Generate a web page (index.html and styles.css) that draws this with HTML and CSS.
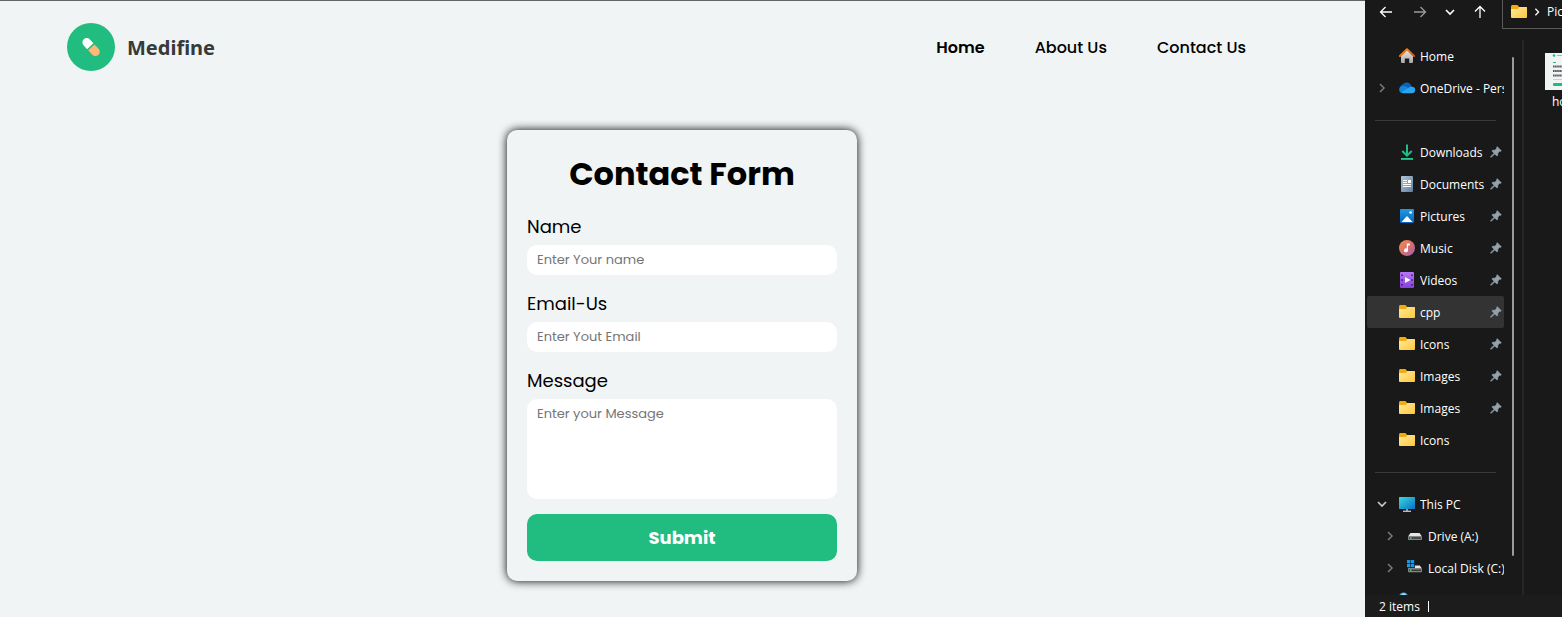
FILE: index.html
```
<!DOCTYPE html>
<html lang="en">
<head>
<meta charset="utf-8">
<meta name="viewport" content="width=device-width, initial-scale=1">
<title>Medifine - Contact</title>
<link rel="stylesheet" href="styles.css">
</head>
<body>
<svg class="sprite" aria-hidden="true">
  <defs>
    <linearGradient id="g-folder" x1="0" y1="0" x2="1" y2="1"><stop offset="0" stop-color="#ffe9a0"/><stop offset="1" stop-color="#ffc83a"/></linearGradient>
    <linearGradient id="g-house" x1="0" y1="0" x2="0" y2="1"><stop offset="0" stop-color="#e4e4e4"/><stop offset="1" stop-color="#a9a9a9"/></linearGradient>
    <linearGradient id="g-roof" x1="0" y1="0" x2="1" y2="1"><stop offset="0" stop-color="#f7941d"/><stop offset="1" stop-color="#d8501a"/></linearGradient>
    <linearGradient id="g-down" x1="0" y1="0" x2="0" y2="1"><stop offset="0" stop-color="#2fd08a"/><stop offset="1" stop-color="#12a58c"/></linearGradient>
    <linearGradient id="g-doc" x1="0" y1="0" x2="1" y2="1"><stop offset="0" stop-color="#b4c6d8"/><stop offset="1" stop-color="#5f7f9f"/></linearGradient>
    <linearGradient id="g-pic" x1="0" y1="0" x2="0" y2="1"><stop offset="0" stop-color="#1f9be6"/><stop offset="1" stop-color="#0a62b8"/></linearGradient>
    <linearGradient id="g-music" x1="0" y1="0" x2="1" y2="1"><stop offset="0" stop-color="#f59152"/><stop offset=".5" stop-color="#d8706c"/><stop offset="1" stop-color="#9a5fb5"/></linearGradient>
    <linearGradient id="g-video" x1="0" y1="0" x2="0" y2="1"><stop offset="0" stop-color="#b675f4"/><stop offset="1" stop-color="#8442dd"/></linearGradient>
    <linearGradient id="g-pc" x1="0" y1="0" x2="1" y2="1"><stop offset="0" stop-color="#35dbe0"/><stop offset="1" stop-color="#0d6fc6"/></linearGradient>
  </defs>
  <symbol id="i-folder" viewBox="0 0 16 16"><path d="M0 2.600Q0 1 1.200 1h5.300L8 3h7q1 0 1 1v2H0z" fill="#f5aa0c"/><path d="M0 5h7l1-2h7.200q.8 0 .8.800v9.300q0 .9-.9.900H.9Q0 14 0 13.100z" fill="url(#g-folder)"/></symbol>
  <symbol id="i-home" viewBox="0 0 16 16"><path d="M2 7.500 8 2l6 5.500V14q0 1-1 1h-2.800v-4.500H5.800V15H3q-1 0-1-1z" fill="url(#g-house)"/><path d="M.9 8 8 1.300 15.100 8" fill="none" stroke="url(#g-roof)" stroke-width="2" stroke-linecap="round" stroke-linejoin="round"/></symbol>
  <symbol id="i-cloud" viewBox="0 0 16 16"><path d="M4 12a4 4 0 0 1-.3-7.600A5 5 0 0 1 12.500 6L9 10z" fill="#0a63b8"/><path d="M3.500 13A3.300 3.300 0 0 1 3.700 6.200q2-.4 4 .9L13 10l-4 3z" fill="#1287dc"/><path d="M2.500 12.300 10 7.600q1.200-1.400 3.200-.8a3.200 3.200 0 0 1-.4 6.400H4q-1 0-1.500-.9z" fill="#2aa5ee"/></symbol>
  <symbol id="i-download" viewBox="0 0 16 16"><path d="M8 .5v11M3.300 7 8 11.700 12.700 7" fill="none" stroke="#22bb8a" stroke-width="2"/><path d="M2 14h12v2H2z" fill="url(#g-down)"/></symbol>
  <symbol id="i-document" viewBox="0 0 16 16"><rect x="2" width="12" height="16" rx="1" fill="url(#g-doc)"/><path d="M4 4.500h4M4 6.500h4M4 8.500h8M4 10.500h8" stroke="#fff" stroke-width="1"/><path d="M9 4h3v3H9z" fill="#fff"/></symbol>
  <symbol id="i-picture" viewBox="0 0 16 16"><rect x="1" y="1" width="14" height="14" rx="1" fill="url(#g-pic)"/><path d="m2.500 14 5-5.600q.5-.5 1 0l5 5.600z" fill="#fff"/><circle cx="11.600" cy="4.500" r="1.300" fill="#fff"/></symbol>
  <symbol id="i-music" viewBox="0 0 16 16"><circle cx="8" cy="8" r="8" fill="url(#g-music)"/><path d="M7.800 3.500h3v2H9v4.800a2 2 0 1 1-1.200-1.800z" fill="#fff"/></symbol>
  <symbol id="i-video" viewBox="0 0 16 16"><rect x="1" width="14" height="16" rx="1" fill="url(#g-video)"/><path d="M2.200 2.500h1.600v1.600H2.200zm0 4.700h1.600v1.600H2.200zm0 4.700h1.600v1.600H2.200zm10-9.400h1.600v1.600h-1.600zm0 4.700h1.600v1.600h-1.600zm0 4.700h1.600v1.600h-1.600z" fill="#3b1c70"/><path d="m6 5 5.500 3L6 11z" fill="#fff"/></symbol>
  <symbol id="i-pc" viewBox="0 0 16 16"><rect y="1" width="16" height="12" rx=".5" fill="url(#g-pc)"/><path d="M7 13h2v2H7z" fill="#8c9aa5"/><path d="M4 14.600h8V16H4z" fill="#b4bec6"/></symbol>
  <symbol id="i-drive" viewBox="0 0 16 16"><path d="M3.500 5h9L15 8.500H1z" fill="#e6e6e6"/><rect x="1" y="8" width="14" height="4" rx=".7" fill="#858585"/><path d="M2 9.300h12v1.500H2z" fill="#383838"/><path d="M3 9.300h1.500v1.400H3z" fill="#3ddc68"/></symbol>
  <symbol id="i-disk" viewBox="0 0 16 16"><path d="M0 0h3.300v3.300H0zm3.900 0h3.300v3.300H3.900zM0 3.900h3.300v3.300H0zm3.900 0h3.300v3.300H3.900z" fill="#1597ec"/><path d="M7.900 5.500h4.800L15 8.500H1.200V7.900h6.700z" fill="#e6e6e6"/><rect x="1" y="8.200" width="14" height="4" rx=".7" fill="#858585"/><path d="M2 9.500h12V11H2z" fill="#383838"/><path d="M3 9.500h1.500V11H3z" fill="#3ddc68"/></symbol>
  <symbol id="i-network" viewBox="0 0 16 16"><circle cx="4.500" cy="5" r="4.500" fill="#4aa3d2"/><path d="M1.500 3.500Q4 0 7 2L5 4.500z" fill="#a9dcf2"/></symbol>
  <symbol id="i-pin" viewBox="0 0 12 12"><path d="M7.200.6 11.400 4.800 10.300 5.500 9.700 5.300 7.800 7.200 7.900 9.300 6.900 10.100 4.700 7.900 1.300 11.300.6 11.200.7 10.600 4 7.200 1.900 5.100 2.700 4.100 4.800 4.200 6.700 2.300 6.500 1.700z" fill="#93a1ab" stroke="#93a1ab" stroke-width=".5"/></symbol>
  <symbol id="i-right" viewBox="0 0 10 10"><path d="m3 1 4 4-4 4" fill="none" stroke="currentColor" stroke-width="1.600"/></symbol>
  <symbol id="i-down" viewBox="0 0 10 10"><path d="m1 3 4 4 4-4" fill="none" stroke="currentColor" stroke-width="1.600"/></symbol>
  <symbol id="i-arrow" viewBox="0 0 14 14"><path d="M13 7H1.500M6.500 2l-5 5 5 5" fill="none" stroke="currentColor" stroke-width="1.300"/></symbol>
</svg>

<div class="desktop">
  <div class="site">
    <header class="site-header">
      <a class="brand" href="#">
        <svg class="brand-mark" viewBox="0 0 48 48" aria-hidden="true"><circle cx="24" cy="24" r="24" fill="#21bc7f"/><g transform="rotate(-43 24 24)"><path d="M19.700 22.900v-5.200a4.300 4.300 0 0 1 8.600 0v5.200z" fill="#fff"/><path d="M19.700 24.500v6a4.300 4.300 0 0 0 8.600 0v-6z" fill="#feb877"/></g></svg>
        <span class="brand-name">Medifine</span>
      </a>
      <nav class="site-nav">
        <a class="site-link current" href="#">Home</a>
        <a class="site-link" href="#">About Us</a>
        <a class="site-link" href="#">Contact Us</a>
      </nav>
    </header>
    <main class="site-main">
      <form class="card">
        <h1 class="card-title">Contact Form</h1>
        <div class="field"><label class="label" for="name">Name</label><input class="control" id="name" type="text" placeholder="Enter Your name"></div>
        <div class="field"><label class="label" for="email">Email-Us</label><input class="control" id="email" type="email" placeholder="Enter Yout Email"></div>
        <div class="field"><label class="label" for="message">Message</label><textarea class="control message" id="message" placeholder="Enter your Message"></textarea></div>
        <button class="submit" type="submit">Submit</button>
      </form>
    </main>
  </div>

  <aside class="explorer">
    <div class="toolbar">
      <div class="history">
        <button class="tool back" type="button" aria-label="Back"><svg class="arrow"><use href="#i-arrow"/></svg></button>
        <button class="tool dim" type="button" aria-label="Forward"><svg class="arrow forward"><use href="#i-arrow"/></svg></button>
        <button class="tool" type="button" aria-label="Recent locations"><svg class="chevron"><use href="#i-down"/></svg></button>
        <button class="tool" type="button" aria-label="Up"><svg class="arrow up"><use href="#i-arrow"/></svg></button>
      </div>
      <div class="address"><svg class="icon"><use href="#i-folder"/></svg><svg class="crumb"><use href="#i-right"/></svg><span>Pic</span></div>
    </div>
    <div class="panes">
      <nav class="tree">
        <a class="item" href="#"><span class="twist"></span><svg class="icon"><use href="#i-home"/></svg><span class="name">Home</span></a>
        <a class="item" href="#"><span class="twist"><svg class="chevron"><use href="#i-right"/></svg></span><svg class="icon"><use href="#i-cloud"/></svg><span class="name">OneDrive - Perso</span></a>
        <hr class="rule">
        <a class="item" href="#"><span class="twist"></span><svg class="icon"><use href="#i-download"/></svg><span class="name">Downloads</span><svg class="pin"><use href="#i-pin"/></svg></a>
        <a class="item" href="#"><span class="twist"></span><svg class="icon"><use href="#i-document"/></svg><span class="name">Documents</span><svg class="pin"><use href="#i-pin"/></svg></a>
        <a class="item" href="#"><span class="twist"></span><svg class="icon"><use href="#i-picture"/></svg><span class="name">Pictures</span><svg class="pin"><use href="#i-pin"/></svg></a>
        <a class="item" href="#"><span class="twist"></span><svg class="icon"><use href="#i-music"/></svg><span class="name">Music</span><svg class="pin"><use href="#i-pin"/></svg></a>
        <a class="item" href="#"><span class="twist"></span><svg class="icon"><use href="#i-video"/></svg><span class="name">Videos</span><svg class="pin"><use href="#i-pin"/></svg></a>
        <a class="item selected" href="#"><span class="twist"></span><svg class="icon"><use href="#i-folder"/></svg><span class="name">cpp</span><svg class="pin"><use href="#i-pin"/></svg></a>
        <a class="item" href="#"><span class="twist"></span><svg class="icon"><use href="#i-folder"/></svg><span class="name">Icons</span><svg class="pin"><use href="#i-pin"/></svg></a>
        <a class="item" href="#"><span class="twist"></span><svg class="icon"><use href="#i-folder"/></svg><span class="name">Images</span><svg class="pin"><use href="#i-pin"/></svg></a>
        <a class="item" href="#"><span class="twist"></span><svg class="icon"><use href="#i-folder"/></svg><span class="name">Images</span><svg class="pin"><use href="#i-pin"/></svg></a>
        <a class="item" href="#"><span class="twist"></span><svg class="icon"><use href="#i-folder"/></svg><span class="name">Icons</span></a>
        <hr class="rule">
        <a class="item" href="#"><span class="twist open"><svg class="chevron"><use href="#i-down"/></svg></span><svg class="icon"><use href="#i-pc"/></svg><span class="name">This PC</span></a>
        <a class="item child" href="#"><span class="twist"><svg class="chevron"><use href="#i-right"/></svg></span><svg class="icon"><use href="#i-drive"/></svg><span class="name">Drive (A:)</span></a>
        <a class="item child" href="#"><span class="twist"><svg class="chevron"><use href="#i-right"/></svg></span><svg class="icon"><use href="#i-disk"/></svg><span class="name">Local Disk (C:)</span></a>
        <a class="item" href="#" aria-label="Network"><span class="twist"></span><svg class="icon"><use href="#i-network"/></svg></a>
      </nav>
      <div class="scroll"><div class="thumb"></div></div>
      <div class="files">
        <a class="file" href="#">
          <svg class="preview" viewBox="0 0 66 37" aria-hidden="true"><path d="M0 0h66v37H0z" fill="#f0f4f5"/><circle cx="9" cy="2.500" r="1.300" fill="#21bc7f"/><path d="M12 2.500h6" stroke="#a8b2b2"/><path d="M8 9.500h3" stroke="#21bc7f"/><path d="M8 13.500h20M8 18h18M8 22.500h20" stroke="#555" stroke-width="1.800" stroke-dasharray="1.600 .5"/><path d="M8 26.500h18" stroke="#ccd2d2"/><rect x="8" y="30" width="14" height="3" rx="1" fill="#21bc7f"/></svg>
          <span class="file-name">ho</span>
        </a>
      </div>
    </div>
    <footer class="status"><span>2 items</span><span class="bar"></span></footer>
  </aside>
</div>
</body>
</html>
```

FILE: styles.css
```
* { box-sizing: border-box; }

body {
  margin: 0;
  font-family: Poppins, Inter, sans-serif;
  color: #000;
  background: #f0f4f5;
}

a { color: inherit; text-decoration: none; }

.sprite { position: absolute; width: 0; height: 0; }

.desktop { display: flex; height: 100vh; overflow: hidden; }

/* Website */
.site {
  flex: 1;
  min-width: 0;
  border-top: 1px solid #626466;
  background: #f0f4f5;
}

.site-header {
  display: flex;
  align-items: center;
  justify-content: space-between;
  padding: 22px 119px 23px 67px;
}

.brand { display: flex; align-items: center; gap: 12px; }
.brand-mark { width: 48px; height: 48px; }
.brand-name {
  padding-top: 2px;
  font: 700 20px/28px "Noto Sans", sans-serif;
  color: #363a3b;
}

.site-nav { display: flex; gap: 50px; padding-top: 2px; }
.site-link { font-size: 16px; line-height: 24px; font-weight: 500; }
.site-link.current { font-weight: 600; }

.site-main { display: flex; justify-content: center; padding: 36px 21px 36px 20px; }

.card {
  display: flex;
  flex-direction: column;
  gap: 15px;
  width: 350px;
  padding: 20px;
  border-radius: 10px;
  background: #f0f4f5;
  box-shadow: 0 0 10px #000;
}

.card-title {
  margin: 0;
  font-size: 32px;
  line-height: 48px;
  font-weight: 700;
  text-align: center;
}

.field { display: flex; flex-direction: column; gap: 5px; }
.label { font-size: 18px; line-height: 27px; }

.control {
  height: 30px;
  padding: 5px 10px;
  border: 0;
  border-radius: 10px;
  background: #fff;
  font: 400 13px/20px Poppins, Inter, sans-serif;
}
.control::placeholder { color: #757575; }
.message { height: 100px; resize: none; }

.submit {
  padding: 10px;
  border: 0;
  border-radius: 10px;
  background: #21bc7f;
  color: #fff;
  font: 700 18px/27px Poppins, Inter, sans-serif;
}

/* File explorer */
.explorer {
  display: flex;
  flex-direction: column;
  width: 197px;
  overflow: hidden;
  background: #191919;
  color: #fff;
  font: 12px/16px "Segoe UI", "Open Sans", sans-serif;
}

.toolbar { display: flex; height: 40px; }
.history {
  display: flex;
  flex: none;
  align-items: flex-start;
  gap: 16px;
  width: 137px;
  padding: 5px 0 0 14px;
}
.tool {
  display: grid;
  flex: none;
  place-items: center;
  width: 14px;
  height: 14px;
  padding: 0;
  border: 0;
  background: none;
  color: #fff;
}
.back { margin-right: 4px; }
.tool.dim { color: #9a9a9a; }
.arrow { width: 14px; height: 14px; }
.forward { transform: rotate(180deg); }
.up { transform: rotate(90deg); }
.chevron { width: 10px; height: 10px; }

.address {
  display: flex;
  flex: 1;
  align-items: center;
  gap: 6px;
  height: 29px;
  padding: 0 0 5px 8px;
  border: solid #5a5a5a;
  border-width: 0 0 1px 1px;
  white-space: nowrap;
}
.crumb { flex: none; width: 8px; height: 8px; }

.icon { flex: none; width: 16px; height: 16px; }

.panes { display: flex; flex: 1; min-height: 0; }

.tree {
  flex: none;
  width: 139px;
  padding-left: 2px;
  overflow: hidden;
}
.item { display: flex; align-items: center; height: 32px; padding-left: 8px; }
.item.child { padding-left: 16px; }
.item.selected { border-radius: 2px; background: #333; }
.twist { flex: none; width: 24px; height: 10px; color: #777; display: flex; padding-left: 2px; }
.twist.open { color: #ccc; }
.name {
  flex: 1;
  min-width: 0;
  margin-left: 5px;
  padding-top: 1px;
  overflow: hidden;
  white-space: nowrap;
}
.pin { flex: none; width: 12px; height: 12px; margin-right: 2px; }
.rule {
  height: 1px;
  margin: 16px 8px 15px;
  border: 0;
  background: #3a3a3a;
}

.scroll {
  flex: none;
  width: 20px;
  padding: 17px 9px 39px 8px;
  border-right: 2px solid #262626;
}
.thumb { width: 2px; height: 100%; border-radius: 1px; background: #9b9b9b; }

.files { flex: 1; min-width: 0; padding: 13px 0 0 21px; overflow: hidden; }
.file { display: flex; flex-direction: column; gap: 4px; width: 66px; }
.preview { width: 66px; height: 37px; }
.file-name { padding-left: 7px; }

.status {
  display: flex;
  align-items: center;
  gap: 8px;
  height: 22px;
  padding: 1px 0 0 14px;
  background: #1c1c1c;
}
.bar { width: 1px; height: 11px; background: #fff; }
```
